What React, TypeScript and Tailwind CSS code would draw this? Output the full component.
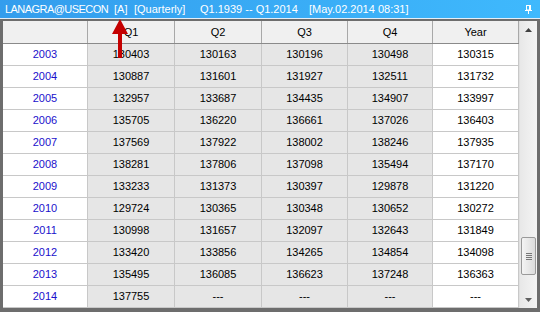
import React from "react";

const rows: [string, string[]][] = [
  ["2003", ["130403", "130163", "130196", "130498", "130315"]],
  ["2004", ["130887", "131601", "131927", "132511", "131732"]],
  ["2005", ["132957", "133687", "134435", "134907", "133997"]],
  ["2006", ["135705", "136220", "136661", "137026", "136403"]],
  ["2007", ["137569", "137922", "138002", "138246", "137935"]],
  ["2008", ["138281", "137806", "137098", "135494", "137170"]],
  ["2009", ["133233", "131373", "130397", "129878", "131220"]],
  ["2010", ["129724", "130365", "130348", "130652", "130272"]],
  ["2011", ["130998", "131657", "132097", "132643", "131849"]],
  ["2012", ["133420", "133856", "134265", "134854", "134098"]],
  ["2013", ["135495", "136085", "136623", "137248", "136363"]],
  ["2014", ["137755", "---", "---", "---", "---"]],
];

const widths = ["w-[85px]", "w-[87px]", "w-[87px]", "w-[86px]", "w-[85px]", "w-[86px]"];
const heads = ["", "Q1", "Q2", "Q3", "Q4", "Year"];

export default function App() {
  return (
    <div
      className="relative w-[540px] h-[312px] bg-[#f0f0f0] flex flex-col overflow-hidden text-[11px]"
      style={{ fontFamily: '"Liberation Sans", Arial, sans-serif' }}
    >
      {/* Title bar */}
      <div className="h-[18px] flex items-center bg-gradient-to-r from-[#339ded] to-[#3fb9fd] text-white text-[11px] leading-none">
        <span className="w-[109px] ml-[5px] whitespace-nowrap tracking-[-0.55px]">LANAGRA@USECON</span>
        <span className="w-[20px] whitespace-nowrap">[A]</span>
        <span className="w-[66px] whitespace-nowrap">[Quarterly]</span>
        <span className="w-[109px] whitespace-pre">Q1.1939 -- Q1.2014</span>
        <span className="whitespace-nowrap">[May.02.2014 08:31]</span>
        <span className="ml-auto mr-[7px] flex items-center">
          <svg width="8" height="9" viewBox="0 0 8 9">
            <rect x="1.5" y="0.5" width="4" height="4.5" fill="none" stroke="white" strokeWidth="1" />
            <rect x="4" y="1" width="1.5" height="4" fill="white" />
            <rect x="0" y="5" width="7" height="1" fill="white" />
            <rect x="3" y="6" width="1" height="3" fill="white" />
          </svg>
        </span>
      </div>
      <div className="h-px bg-[#e4eef8]" />
      {/* Frame */}
      <div className="flex-1 flex flex-col border-t-2 border-[#6d6d6d] border-l-[3px] border-r-[3px] border-b-[4px]">
        <div className="flex-1 flex">
          {/* Grid */}
          <div className="flex flex-col bg-white">
            <div className="flex h-[23px] border-b border-[#8a8a8a] bg-[#f0f0f0]">
              {heads.map((h, i) => (
                <div
                  key={i}
                  className={`${widths[i]} h-full flex items-center justify-center border-r border-[#a8a8a8] text-black`}
                >
                  {h}
                </div>
              ))}
            </div>
            {rows.map(([year, vals]) => (
              <div key={year} className="flex h-[22px] border-b border-[#c8c8c8]">
                <div className={`${widths[0]} h-full flex items-center justify-center border-r border-[#c8c8c8] bg-white text-[#1a10cc]`}>
                  {year}
                </div>
                {vals.map((v, j) => (
                  <div
                    key={j}
                    className={`${widths[j + 1]} h-full flex items-center justify-center border-r border-[#c8c8c8] text-black ${
                      j < 4 ? "bg-[#e6e6e6]" : "bg-white"
                    }`}
                  >
                    {v}
                  </div>
                ))}
              </div>
            ))}
          </div>
          {/* Scrollbar */}
          <div className="w-[18px] flex flex-col bg-gradient-to-r from-[#e8e8e8] to-[#f4f4f4] border-l border-[#e0e0e0]">
            <div className="h-[17px] flex items-center justify-center">
              <svg width="7" height="4" viewBox="0 0 7 4">
                <path d="M0 4 L3.5 0 L7 4 Z" fill="#404040" />
              </svg>
            </div>
            <div className="flex-1 flex flex-col justify-end">
              <div className="mx-[1px] h-[38px] rounded-[2px] border border-[#9a9a9a] bg-gradient-to-r from-[#f4f4f4] to-[#dcdcdc] flex flex-col items-center justify-center gap-[1px]">
                <div className="w-[6px] h-px bg-[#777]" />
                <div className="w-[6px] h-px bg-[#777]" />
                <div className="w-[6px] h-px bg-[#777]" />
                <div className="w-[6px] h-px bg-[#777]" />
              </div>
              <div className="h-[16px]" />
            </div>
            <div className="h-[17px] flex items-center justify-center">
              <svg width="7" height="4" viewBox="0 0 7 4">
                <path d="M0 0 L7 0 L3.5 4 Z" fill="#606060" />
              </svg>
            </div>
          </div>
        </div>
      </div>
      {/* Red arrow annotation */}
      <svg className="absolute left-[110px] top-[18px]" width="20" height="42" viewBox="0 0 20 42">
        <path d="M10 1 L18 16 L12 16 L12 40 L8 40 L8 16 L2 16 Z" fill="#c40000" />
      </svg>
    </div>
  );
}
